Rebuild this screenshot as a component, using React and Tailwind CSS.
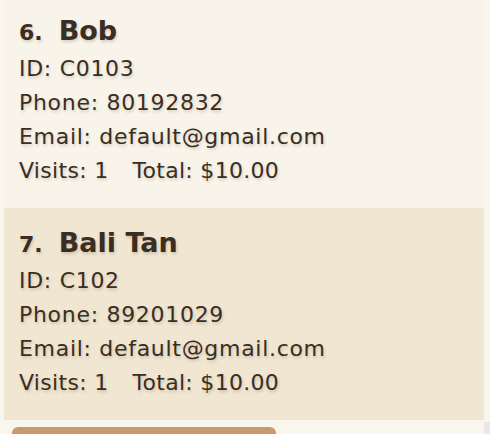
const customers = [
    { no: 6, name: 'Bob', id: 'C0103', phone: '80192832', email: 'default@gmail.com', visits: 1, total: 10, shade: false },
    { no: 7, name: 'Bali Tan', id: 'C102', phone: '89201029', email: 'default@gmail.com', visits: 1, total: 10, shade: true },
];

const shadow = '[text-shadow:1px_2px_3px_rgba(60,40,20,0.18)]';

export default function App() {
    return (
        <div className="h-[434px] w-[490px] overflow-hidden bg-[#f9f6ee] flex font-['DejaVu_Sans',sans-serif] text-[#3a2d22]">
            <div className="flex-1 pl-1 -mt-1">
                {customers.map((c) => (
                    <div
                        key={c.id}
                        className={`px-[15px] pt-[16px] pb-[20px] ${c.shade ? 'bg-[#f0e6d1]' : 'bg-[#f8f4ea]'}`}
                    >
                        <div className={`flex items-baseline gap-[16px] leading-[38px] ${shadow}`}>
                            <span className="text-[22px] font-semibold">{c.no}.</span>
                            <span className="text-[27px] font-bold">{c.name}</span>
                        </div>
                        <div className={`text-[22px] leading-[34px] tracking-[0.7px] ${shadow}`}>
                            <p>ID: {c.id}</p>
                            <p>Phone: {c.phone}</p>
                            <p>Email: {c.email}</p>
                            <p className="tracking-[0.3px]">
                                Visits: {c.visits}
                                <span className="ml-[24px]">Total: ${c.total.toFixed(2)}</span>
                            </p>
                        </div>
                    </div>
                ))}
                <div className="pl-2 pt-[7px]">
                    <button className="w-[264px] h-[40px] rounded-md bg-[#c99a72] text-white"></button>
                </div>
            </div>
            <div className="w-[6px] flex flex-col justify-end">
                <div className="h-[12px] bg-[#e8e8e8]"></div>
            </div>
        </div>
    );
}
